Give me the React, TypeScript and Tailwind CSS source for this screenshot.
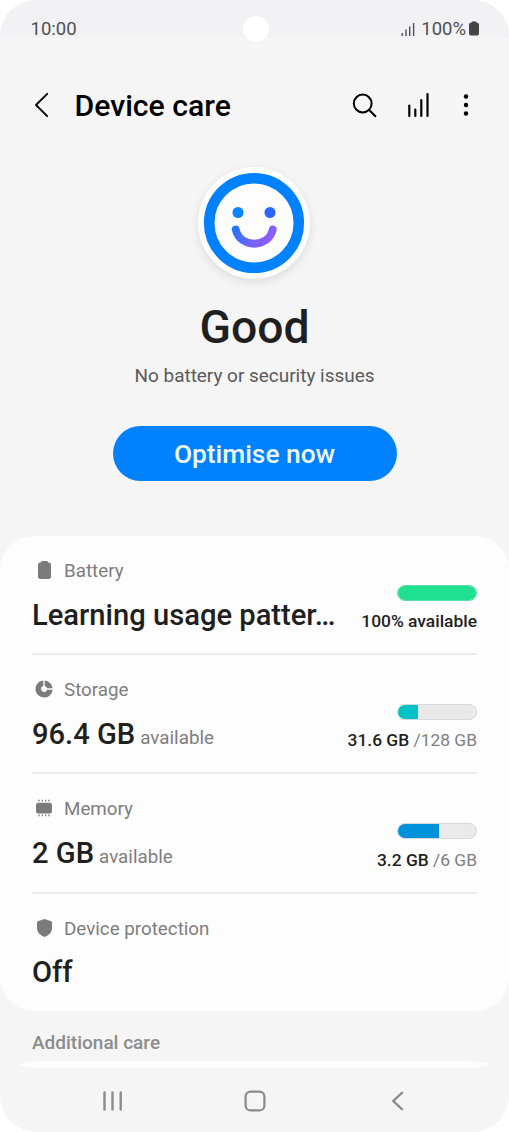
import type { ReactNode } from "react";

type CareItem = {
  label: string;
  value: string;
  suffix?: string;
  icon: ReactNode;
  usage?: {
    used: string;
    total?: string;
    percent: number;
    color: string;
    track: string;
  };
};

const BatteryGlyph = ({ className }: { className: string }): JSX.Element => (
  <svg viewBox="0 0 13 18" className={className} fill="currentColor">
    <path d="M4 0h5a.8.8 0 0 1 .8.8v.7h.9A2.3 2.3 0 0 1 13 3.800v11.700A2.500 2.500 0 0 1 10.500 18h-8A2.500 2.500 0 0 1 0 15.500V3.800a2.300 2.300 0 0 1 2.300-2.300h.9V.8A.8.8 0 0 1 4 0z" />
  </svg>
);

const StorageGlyph = (): JSX.Element => (
  <svg viewBox="0 0 18 18" className="h-[18px] w-[18px]" fill="currentColor">
    <path d="M8.300.4A8.600 8.600 0 1 0 17.600 9.700H12.100A3.100 3.100 0 1 1 8.300 6z" />
    <path d="M9.700.4A8.600 8.600 0 0 1 17.600 8.300H12A3.100 3.100 0 0 0 9.700 6z" />
  </svg>
);

const MemoryGlyph = (): JSX.Element => (
  <svg viewBox="0 0 16 18" className="h-[18px] w-4" fill="currentColor">
    <rect x="0" y="3.700" width="16" height="10.800" rx="2.200" />
    <path
      d="M3 .8v1.800M6.300.8v1.800M9.600.8v1.800M12.900.8v1.800M3 15.500v1.800M6.300 15.500v1.800M9.600 15.500v1.800M12.900 15.500v1.800"
      stroke="currentColor"
      strokeWidth="1.300"
    />
  </svg>
);

const ShieldGlyph = (): JSX.Element => (
  <svg viewBox="0 0 15 18" className="h-[18px] w-[15px]" fill="currentColor">
    <path d="M7.500 0 14.200 2.200q.8.300.8 1.100V9c0 4.300-3 7.300-7.500 9C3 16.300 0 13.300 0 9V3.300q0-.8.8-1.100z" />
  </svg>
);

const careItems: CareItem[] = [
  {
    label: "Battery",
    value: "Learning usage patter…",
    icon: <BatteryGlyph className="h-[18px] w-[13px]" />,
    usage: {
      used: "100% available",
      percent: 100,
      color: "bg-[#1fe08f]",
      track: "border-[#5fdcaa]",
    },
  },
  {
    label: "Storage",
    value: "96.4 GB",
    suffix: "available",
    icon: <StorageGlyph />,
    usage: {
      used: "31.6 GB",
      total: "/128 GB",
      percent: 25,
      color: "bg-[#00c3c7]",
      track: "border-[#d8d8d8]",
    },
  },
  {
    label: "Memory",
    value: "2 GB",
    suffix: "available",
    icon: <MemoryGlyph />,
    usage: {
      used: "3.2 GB",
      total: "/6 GB",
      percent: 53,
      color: "bg-[#0091db]",
      track: "border-[#d8d8d8]",
    },
  },
  {
    label: "Device protection",
    value: "Off",
    icon: <ShieldGlyph />,
  },
];

const StatusBar = (): JSX.Element => (
  <div className="relative flex h-[38px] shrink-0 items-center justify-between bg-[#f2f2f4] pl-[30.5px] pr-[30px] pt-[19px] text-[18.5px] leading-5 text-[#505050]">
    <span>10:00</span>
    <div className="absolute left-[243px] top-4 h-[26px] w-[26px] rounded-full bg-white" />
    <div className="flex items-center">
      <svg viewBox="0 0 14 14" className="mr-[6px] h-[14px] w-[14px]" stroke="currentColor" strokeWidth="1.400">
        <path d="M1.200 14v-3M5 14V7.500M8.700 14V4.500M12.600 14V1" />
      </svg>
      <span>100%</span>
      <BatteryGlyph className="ml-[3px] h-[15px] w-[10px] text-[#454545]" />
    </div>
  </div>
);

const TitleBar = (): JSX.Element => (
  <header className="flex h-[134px] shrink-0 items-center pl-[34px] pr-[40px] text-black">
    <svg viewBox="0 0 15 26" className="h-[26px] w-[15px]" fill="none" stroke="currentColor" strokeWidth="1.900" strokeLinecap="round" strokeLinejoin="round">
      <path d="M13.200 1.800 2 13l11.200 11.200" />
    </svg>
    <h1 className="ml-[25.5px] flex-1 pt-[2px] text-[30.2px] font-medium leading-9">Device care</h1>
    <svg viewBox="0 0 25 25" className="h-[25px] w-[25px]" fill="none" stroke="currentColor" strokeWidth="2" strokeLinecap="round">
      <circle cx="10.700" cy="10.500" r="8.900" />
      <path d="m17.200 17 6.200 6.200" />
    </svg>
    <svg viewBox="0 0 22 26" className="ml-[30px] h-[26px] w-[22px]" stroke="currentColor" strokeWidth="2.200" strokeLinecap="round">
      <path d="M2.300 13.500V24M8.300 17.500V24M14.300 8V24M20.500 2v22" />
    </svg>
    <svg viewBox="0 0 6 22" className="ml-[34px] h-[22px] w-[6px]" fill="currentColor">
      <circle cx="3" cy="2.500" r="2.200" />
      <circle cx="3" cy="11" r="2.200" />
      <circle cx="3" cy="19.500" r="2.200" />
    </svg>
  </header>
);

const SmileBadge = (): JSX.Element => (
  <div className="mr-px h-28 w-28 rounded-full bg-[#fdfdfd] shadow-[0_3px_10px_rgba(0,0,0,0.11)]">
    <svg viewBox="0 0 112 112" className="h-28 w-28" fill="none">
      <defs>
        <linearGradient id="smile" gradientUnits="userSpaceOnUse" x1="34" y1="58" x2="72" y2="78">
          <stop offset="0" stopColor="#1478fa" />
          <stop offset="0.550" stopColor="#6f63f8" />
          <stop offset="1" stopColor="#8f5cff" />
        </linearGradient>
      </defs>
      <circle cx="56" cy="56" r="44.800" stroke="#0082ff" strokeWidth="10.600" />
      <circle cx="40" cy="45.500" r="5.500" fill="#0a84ff" />
      <circle cx="72" cy="45.500" r="5.500" fill="#2c66ff" />
      <path d="M37.700 62.500C42 81.500 70.500 81.500 74.800 62.500" stroke="url(#smile)" strokeWidth="7.800" strokeLinecap="round" />
    </svg>
  </div>
);

const CareRow = ({ item }: { item: CareItem }): JSX.Element => (
  <li className="flex h-[119.2px] justify-between border-b-2 border-[#ebebeb] last:border-transparent">
    <div className="pt-[22px]">
      <div className="flex h-6 items-start text-[18.8px] leading-6 text-[#7d7d7d]">
        <span className="flex w-6 justify-center pt-[3px] text-[#7b7b7b]">{item.icon}</span>
        <span className="ml-2 pt-px">{item.label}</span>
      </div>
      <p className="mt-[14.6px] whitespace-nowrap text-[29.15px] font-medium leading-9 text-[#1f1f1f]">
        {item.value}
        {item.suffix && (
          <span className="ml-[5px] text-[18.8px] font-normal text-[#7d7d7d]">{item.suffix}</span>
        )}
      </p>
    </div>

    {item.usage && (
      <div className="flex flex-col items-end pt-[48.6px]">
        <div className={`h-4 w-20 overflow-hidden rounded-full border bg-[#eaeaea] ${item.usage.track}`}>
          <div className={`h-full ${item.usage.color}`} style={{ width: `${item.usage.percent}%` }} />
        </div>
        <p className="mt-[10.6px] whitespace-nowrap text-[17.4px] leading-5 text-[#7d7d7d]">
          <span className="font-medium text-[#1f1f1f]">{item.usage.used}</span>
          {item.usage.total && ` ${item.usage.total}`}
        </p>
      </div>
    )}
  </li>
);

const NavigationBar = (): JSX.Element => (
  <nav className="flex h-[65px] shrink-0 items-center justify-between pl-[102px] pr-[104px] text-[#8b8b8b]">
    <svg viewBox="0 0 21 20" className="h-5 w-[21px]" stroke="currentColor" strokeWidth="2.400" strokeLinecap="round">
      <path d="M2.500 1.500v17M10.500 1.500v17M18.700 1.500v17" />
    </svg>
    <svg viewBox="0 0 22 22" className="mr-[5px] h-[22px] w-[22px]" fill="none" stroke="currentColor" strokeWidth="2.200">
      <rect x="1.600" y="1.600" width="18.800" height="18.800" rx="5" />
    </svg>
    <svg viewBox="0 0 14 20" className="h-5 w-[14px]" fill="none" stroke="currentColor" strokeWidth="2.400">
      <path d="M11.800 1 2.300 10l9.500 9" />
    </svg>
  </nav>
);

export default function App(): JSX.Element {
  return (
    <div className="h-[1132px] w-[509px] overflow-hidden bg-white font-['Roboto',sans-serif]">
      <main className="flex h-full flex-col overflow-hidden rounded-[36px] bg-[#f5f5f5]">
        <StatusBar />
        <TitleBar />

        <section className="-mt-[5px] flex h-[369px] shrink-0 flex-col items-center">
          <SmileBadge />
          <h2 className="mt-[21px] text-[46.3px] font-medium leading-[54px] text-[#1f1f1f]">Good</h2>
          <p className="mt-[10px] text-[18.95px] leading-6 text-[#5a5a5a]">No battery or security issues</p>
          <button className="mt-[38px] h-[55px] w-[284px] rounded-full bg-[#0082ff] pt-[3px] text-[26.3px] font-medium text-[#ecfaff]">
            Optimise now
          </button>
        </section>

        <ul className="h-[475px] shrink-0 overflow-hidden rounded-[34px] bg-[#fdfdfd] px-8">
          {careItems.map((item) => (
            <CareRow key={item.label} item={item} />
          ))}
        </ul>

        <div className="h-[57px] shrink-0 overflow-hidden">
          <h3 className="px-8 pt-5 text-[19px] font-medium leading-6 text-[#8c8c8c]">Additional care</h3>
          <div className="mx-[19px] mt-[6px] h-[7px] rounded-[28px/50%] bg-[#fdfdfd]" />
        </div>

        <NavigationBar />
      </main>
    </div>
  );
}
